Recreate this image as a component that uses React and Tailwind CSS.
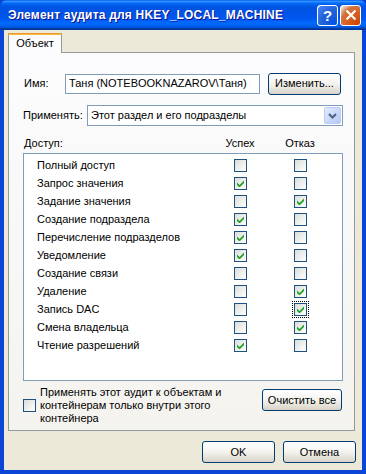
import React from "react";

const rows = [
  { name: "Полный доступ", ok: false, fail: false },
  { name: "Запрос значения", ok: true, fail: false },
  { name: "Задание значения", ok: false, fail: true },
  { name: "Создание подраздела", ok: true, fail: false },
  { name: "Перечисление подразделов", ok: true, fail: false },
  { name: "Уведомление", ok: true, fail: false },
  { name: "Создание связи", ok: false, fail: false },
  { name: "Удаление", ok: false, fail: true },
  { name: "Запись DAC", ok: false, fail: true, focus: true },
  { name: "Смена владельца", ok: false, fail: true },
  { name: "Чтение разрешений", ok: true, fail: false },
];

function Check({ checked, focus }) {
  return (
    <span className="relative inline-flex w-[13px] h-[13px] shrink-0 items-center justify-center border border-[#1C5180] bg-linear-to-br from-[#DCDCD7] to-white">
      {checked && (
        <svg width="7" height="7" viewBox="0 0 7 7">
          <polygon points="0,2.5 2.5,5 7,0.5 7,3 2.5,7.5 0,5" fill="#21A121" />
        </svg>
      )}
      {focus && <span className="absolute -inset-[3px] border border-dotted border-black" />}
    </span>
  );
}

function XpButton({ children, className }) {
  return (
    <button className={"h-[22px] rounded-[3px] border border-[#003C74] bg-linear-to-b from-white via-[#F4F3EE] to-[#D8D3C8] text-black text-[11px] leading-none " + className}>
      {children}
    </button>
  );
}

export default function App() {
  return (
    <div
      className="w-[366px] h-[474px] flex flex-col bg-[#0A45D8] text-[11px] text-black overflow-hidden"
      style={{ fontFamily: '"Liberation Sans", Arial, sans-serif' }}
    >
      {/* title bar */}
      <div className="h-[30px] shrink-0 flex items-center pl-[8px] pr-[5px] rounded-t-[7px] bg-[linear-gradient(180deg,#0058EE_0%,#3593FF_4%,#288EFF_6%,#127DFF_8%,#036FFC_10%,#0262EE_14%,#0057E5_20%,#0054E3_24%,#0055EB_56%,#005BF5_66%,#026AFE_76%,#0062EF_86%,#0052D6_92%,#0040AB_94%,#003092_100%)]">
        <span className="flex-1 text-white font-bold text-[12px] tracking-[0.2px] [text-shadow:1px_1px_#0F1089]">
          Элемент аудита для HKEY_LOCAL_MACHINE
        </span>
        <div className="flex gap-[2px]">
          <div className="w-[21px] h-[21px] rounded-[3px] border border-white flex items-center justify-center bg-[radial-gradient(circle_at_90%_90%,#0054E9_0%,#2263D5_55%,#4480F4_90%,#fff_100%)]">
            <span className="text-white font-bold text-[15px] leading-none">?</span>
          </div>
          <div className="w-[21px] h-[21px] rounded-[3px] border border-white flex items-center justify-center bg-[radial-gradient(circle_at_90%_90%,#CC4600_0%,#DC6527_55%,#CD7546_70%,#fff_100%)]">
            <svg width="12" height="12" viewBox="0 0 12 12">
              <path d="M1.5 1.5 L10.5 10.5 M10.5 1.5 L1.5 10.5" stroke="white" strokeWidth="2.2" />
            </svg>
          </div>
        </div>
      </div>

      {/* client area */}
      <div className="flex-1 mx-[4px] mb-[4px] bg-[#ECE9D8] flex flex-col pt-[3px]">
        {/* tab */}
        <div className="pl-[4px] flex">
          <div className="relative z-10 -mb-[1px] h-[20px] w-[54px] bg-[#FCFCFE] border-x border-[#919B9C] flex flex-col">
            <div className="h-[3px] -mx-px bg-linear-to-b from-[#E68B2C] to-[#FFC73C] rounded-t-[2px]" />
            <div className="flex-1 flex items-center justify-center pb-[2px]">Объект</div>
          </div>
        </div>

        {/* tab page */}
        <div className="ml-[4px] mr-[7px] h-[379px] border border-[#919B9C] bg-linear-to-b from-[#FCFCFE] to-[#F4F3EE] pl-[14px] pr-[11px] flex flex-col">
          <div className="mt-[20px] h-[21px] flex items-center">
            <span className="w-[42px] pl-px">Имя:</span>
            <div className="w-[195px] h-[20px] border border-[#7F9DB9] bg-white flex items-center pl-[3px]">
              Таня (NOTEBOOKNAZAROV\Таня)
            </div>
            <XpButton className="ml-[8px] w-[73px] h-[21px]">Изменить...</XpButton>
          </div>

          <div className="mt-[11px] h-[21px] flex items-center">
            <span className="w-[64px]">Применять:</span>
            <div className="w-[256px] h-[21px] border border-[#7F9DB9] bg-white flex items-center pl-[3px] pr-px">
              <span className="flex-1">Этот раздел и его подразделы</span>
              <div className="w-[17px] h-[17px] rounded-[2px] border border-[#B9CCF6] bg-linear-to-br from-[#E2EBFE] to-[#B4C8F5] flex items-center justify-center">
                <svg width="9" height="6" viewBox="0 0 9 6">
                  <path d="M1 1 L4.5 4.5 L8 1" stroke="#4D6185" strokeWidth="2" fill="none" />
                </svg>
              </div>
            </div>
          </div>

          <div className="mt-[10px] h-[14px] flex items-center">
            <span className="w-[187px] pl-px">Доступ:</span>
            <span className="w-[60px] text-center">Успех</span>
            <span className="w-[60px] text-center">Отказ</span>
          </div>

          <div className="mt-[3px] w-[320px] h-[228px] border border-[#7F9DB9] bg-white pt-[2px]">
            {rows.map((r) => (
              <div key={r.name} className="h-[18px] flex items-center">
                <span className="w-[186px] pl-[13px]">{r.name}</span>
                <span className="w-[60px] flex justify-center">
                  <Check checked={r.ok} />
                </span>
                <span className="w-[60px] flex justify-center">
                  <Check checked={r.fail} focus={r.focus} />
                </span>
              </div>
            ))}
          </div>

          <div className="mt-[5px] flex items-start">
            <div className="w-[239px] flex items-center">
              <Check />
              <span className="ml-[4px] leading-[13px]">
                Применять этот аудит к объектам и
                <br />
                контейнерам только внутри этого
                <br />
                контейнера
              </span>
            </div>
            <XpButton className="mt-[3px] w-[80px] h-[21px]">Очистить все</XpButton>
          </div>
        </div>

        {/* dialog buttons */}
        <div className="mt-[10px] flex justify-end gap-[8px] pr-[6px]">
          <XpButton className="w-[73px] h-[22px]">OK</XpButton>
          <XpButton className="w-[73px] h-[22px]">Отмена</XpButton>
        </div>
      </div>
    </div>
  );
}
